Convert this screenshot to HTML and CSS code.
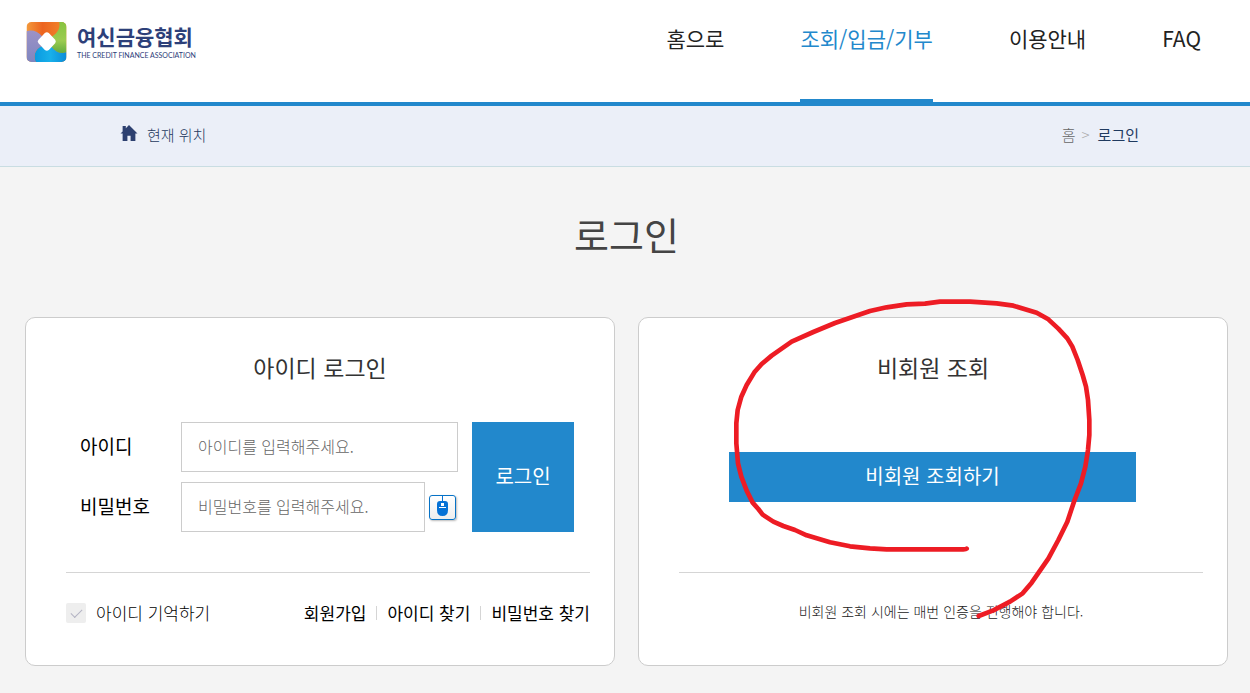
FILE: index.html
```html
<!DOCTYPE html>
<html lang="ko">
<head>
<meta charset="utf-8">
<meta name="viewport" content="width=device-width, initial-scale=1">
<title>로그인 - 여신금융협회</title>
<link rel="stylesheet" href="styles.css">
</head>
<body>
<header class="header">
  <a class="logo" href="#">
    <svg class="logo-mark" viewBox="0 0 120 120" aria-hidden="true">
      <defs>
        <linearGradient id="orange" x1="0" y1="0" x2="1" y2="0"><stop offset="0" stop-color="#f39a3c"/><stop offset="0.4" stop-color="#ec6420"/><stop offset="1" stop-color="#f28a2c"/></linearGradient>
        <linearGradient id="green" x1="0" y1="0" x2="0" y2="1"><stop offset="0" stop-color="#86c440"/><stop offset="0.6" stop-color="#9ccb50"/><stop offset="1" stop-color="#62ad3e"/></linearGradient>
        <linearGradient id="cyan" x1="0" y1="0" x2="1" y2="0"><stop offset="0" stop-color="#0a9ae0"/><stop offset="0.5" stop-color="#18b0ea"/><stop offset="1" stop-color="#0b8bd8"/></linearGradient>
        <linearGradient id="purple" x1="0" y1="0" x2="0" y2="1"><stop offset="0" stop-color="#9c92c6"/><stop offset="1" stop-color="#7f86c0"/></linearGradient>
        <clipPath id="tile"><rect width="120" height="120" rx="15"/></clipPath>
      </defs>
      <g clip-path="url(#tile)">
        <rect width="120" height="120" fill="url(#orange)"/>
        <path d="M98 0H120V90C105 98 88 90 75 74L61 58L76 44C96 32 102 15 98 0Z" fill="url(#green)"/>
        <path d="M120 90V120H28C20 105 24 82 45 73L61 58L75 74C88 90 105 98 120 90Z" fill="url(#cyan)"/>
        <path d="M0 28C15 22 35 28 46 42L61 58L45 73C24 82 20 105 28 120H0Z" fill="url(#purple)"/>
        <path d="M55 33Q61 28 67 33L86 53Q90 58 86 64L67 84Q61 89 55 84L36 64Q31 58 36 53Z" fill="#fff"/>
      </g>
    </svg>
    <span class="logo-text">
      <span class="logo-name">여신금융협회</span>
      <span class="logo-sub">THE CREDIT FINANCE ASSOCIATION</span>
    </span>
  </a>
  <nav class="nav">
    <a class="nav-link" href="#">홈으로</a>
    <a class="nav-link nav-active" href="#">조회/입금/기부</a>
    <a class="nav-link" href="#">이용안내</a>
    <a class="nav-link" href="#">FAQ</a>
  </nav>
</header>

<div class="location">
  <div class="location-label">
    <svg class="home-icon" viewBox="0 0 16 16" aria-hidden="true"><path d="M2 1H5V3L8 0L16 8H14V15H9.500V10H6.500V15H2V8H0L2 6Z"/></svg>
    <span>현재 위치</span>
  </div>
  <nav class="crumbs">
    <a class="crumb" href="#">홈</a>
    <span class="crumb-sep">&gt;</span>
    <span class="crumb-current">로그인</span>
  </nav>
</div>

<main class="main">
  <h1 class="title">로그인</h1>
  <div class="cards">
    <section class="card">
      <h2 class="card-title">아이디 로그인</h2>
      <form class="login">
        <div class="fields">
          <div class="field">
            <label class="field-label" for="uid">아이디</label>
            <input class="field-input" id="uid" type="text" placeholder="아이디를 입력해주세요.">
          </div>
          <div class="field">
            <label class="field-label" for="pwd">비밀번호</label>
            <input class="field-input" id="pwd" type="password" placeholder="비밀번호를 입력해주세요.">
            <button class="mouse" type="button" aria-label="마우스 입력">
              <svg class="mouse-icon" viewBox="0 0 11 20" aria-hidden="true">
                <path d="M5 0H6V5H8Q11 5 11 8V14Q11 20 5.500 20Q0 20 0 14V8Q0 5 3 5H5Z" fill="#0672d6"/>
                <path d="M4 7H7V10H4ZM2 11H9V12H2Z" fill="#fff"/>
              </svg>
            </button>
          </div>
        </div>
        <button class="submit" type="submit">로그인</button>
      </form>
      <div class="card-foot">
        <label class="remember"><input class="check" type="checkbox">아이디 기억하기</label>
        <ul class="links">
          <li class="links-item"><a class="link" href="#">회원가입</a></li>
          <li class="links-item"><a class="link" href="#">아이디 찾기</a></li>
          <li class="links-item"><a class="link" href="#">비밀번호 찾기</a></li>
        </ul>
      </div>
    </section>

    <section class="card">
      <h2 class="card-title">비회원 조회</h2>
      <div class="guest"><button class="guest-button" type="button">비회원 조회하기</button></div>
      <div class="card-foot"><p class="note">비회원 조회 시에는 매번 인증을 진행해야 합니다.</p></div>
      <svg class="scribble" viewBox="0 0 1200 1020" aria-hidden="true">
        <path d="M740 776Q738 778 730 778H500L450 775L390 769L330 757L260 736L225 720L190 708L160 695L128 674L115 657L98 638L80 602L64 560L54 520L49 460V400L53 360L64 320L80 285L103 247L125 222L155 197L215 155L280 126L345 99L450 63L500 52L560 43L615 41L660 35H750L830 40L880 47L950 68L985 88L1015 116L1042 145L1057 170L1073 210L1088 255L1098 290L1104 330L1108 390V435L1104 480L1096 530L1083 580L1062 635L1042 695L1015 750L985 806L935 878L908 910L870 935L820 961L776 978"/>
      </svg>
    </section>
  </div>
</main>
</body>
</html>
```

FILE: styles.css
```css
* {
  box-sizing: border-box;
}

body {
  margin: 0;
  background: #f4f4f4;
  color: #222;
  font-family: "Noto Sans CJK KR", sans-serif;
  font-size: 15px;
  line-height: 24px;
}

a {
  color: inherit;
  text-decoration: none;
}

button,
input {
  font-family: inherit;
  margin: 0;
}

.header {
  display: flex;
  justify-content: space-between;
  align-items: flex-start;
  min-height: 106px;
  padding: 0 49px 0 26px;
  background: #fff;
  border-bottom: 4px solid #2288cc;
}

.logo {
  display: flex;
  gap: 10px;
  padding-top: 22px;
}

.logo-mark {
  width: 41px;
  height: 40px;
}

.logo-text {
  display: flex;
  flex-direction: column;
  color: #2d4079;
  white-space: nowrap;
}

.logo-name {
  font-size: 21px;
  font-weight: 700;
  line-height: 28px;
}

.logo-sub {
  font-family: Lato, sans-serif;
  font-size: 7px;
  font-weight: 400;
  line-height: 10px;
}

.nav {
  display: flex;
  gap: 76px;
}

.nav-link {
  height: 102px;
  padding-top: 23px;
  font-size: 21px;
  line-height: 30px;
  white-space: nowrap;
}

.nav-active {
  color: #2288cc;
  border-bottom: 3px solid #2288cc;
}

.location {
  display: flex;
  justify-content: space-between;
  align-items: center;
  min-height: 61px;
  padding: 0 111px 2px 120px;
  background: #ebeff8;
  border-bottom: 1px solid #c9dde2;
  color: #1f3a5f;
}

.location-label {
  display: flex;
  gap: 9px;
}

.home-icon {
  width: 18px;
  height: 17px;
  margin-top: 2px;
  fill: #2d4070;
}

.location-label,
.crumb,
.crumb-sep {
  font-weight: 300;
}

.crumbs {
  display: flex;
  gap: 6px;
}

.crumb {
  color: #666;
}

.crumb-sep {
  color: #aaa;
}

.crumb-current {
  margin-left: 2px;
}

.main {
  padding: 37px 22px 27px 25px;
}

.title {
  margin: 0 0 53px;
  color: #444;
  font-size: 38px;
  font-weight: 400;
  line-height: 60px;
  text-align: center;
}

.cards {
  display: grid;
  grid-template-columns: 1fr 1fr;
  gap: 23px;
}

.card {
  position: relative;
  padding: 32px 24px 40px 40px;
  background: #fff;
  border: 1px solid #ccc;
  border-radius: 10px;
}

.card-title {
  margin: 0 16px 38px 0;
  color: #333;
  font-size: 23px;
  font-weight: 400;
  line-height: 34px;
  text-align: center;
}

.login {
  display: flex;
  gap: 14px;
  padding: 0 16px 0 14px;
}

.fields {
  display: flex;
  flex: 1;
  flex-direction: column;
  gap: 10px;
}

.field {
  display: flex;
  align-items: center;
}

.field-label {
  flex: 0 0 101px;
  padding-bottom: 2px;
  color: #000;
  font-size: 19px;
}

.field-input {
  flex: 1;
  min-width: 0;
  height: 50px;
  padding: 0 16px 2px;
  border: 1px solid #ccc;
  background: #fff;
  font-size: 16px;
  font-weight: 300;
}

.field-input::placeholder {
  color: #666;
}

.mouse {
  display: flex;
  justify-content: center;
  width: 27px;
  height: 25px;
  margin: 0 2px 0 4px;
  padding: 0;
  border: 1px solid #0672c6;
  border-radius: 3px;
  background: linear-gradient(#fff, #eee);
  box-shadow: 1px 1px 2px #bbb;
}

.mouse-icon {
  width: 11px;
  height: 20px;
}

.submit,
.guest-button {
  padding: 0 0 4px;
  border: 0;
  background: #2288cc;
  color: #fff;
  font-size: 20px;
}

.submit {
  width: 102px;
}

.guest {
  display: flex;
  align-items: center;
  height: 110px;
  padding: 0 67px 0 50px;
}

.guest-button {
  flex: 1;
  height: 50px;
}

.card-foot {
  display: flex;
  justify-content: space-between;
  min-height: 53px;
  margin-top: 40px;
  padding-top: 28px;
  border-top: 1px solid #d5d5d5;
}

.remember {
  display: flex;
  align-items: center;
  gap: 10px;
  color: #000;
  font-size: 17px;
  font-weight: 300;
}

.check {
  appearance: none;
  width: 20px;
  height: 20px;
  border-radius: 2px;
  background: #eee;
}

.check::before {
  content: "";
  display: block;
  width: 10px;
  height: 5px;
  margin: 6px 5px;
  border: solid #b4b4c4;
  border-width: 0 0 1px 1px;
  transform: rotate(-45deg);
}

.links {
  display: flex;
  margin: 0;
  padding: 0;
  list-style: none;
  color: #000;
  font-size: 17px;
}

.links-item {
  display: flex;
  align-items: center;
}

.links-item + .links-item::before {
  content: "";
  width: 1px;
  height: 14px;
  margin: 0 10px;
  background: #d5d5d5;
}

.note {
  flex: 1;
  margin: 0;
  color: #222;
  font-size: 14px;
  font-weight: 300;
  line-height: 20px;
  text-align: center;
}

.scribble {
  position: absolute;
  top: -28px;
  left: calc(50% - 213px);
  width: 400px;
  height: 340px;
  fill: none;
  stroke: #ed1c24;
  stroke-width: 14;
  stroke-linecap: round;
  stroke-linejoin: round;
  pointer-events: none;
}
```
